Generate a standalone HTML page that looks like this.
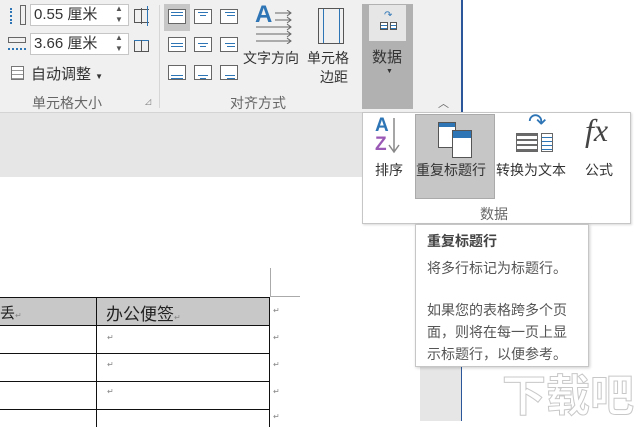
<!DOCTYPE html>
<html><head><meta charset="utf-8"><style>
*{margin:0;padding:0;box-sizing:border-box}
body{width:641px;height:421px;overflow:hidden;position:relative;background:#fff;font-family:"Liberation Sans","Noto Sans CJK SC",sans-serif;color:#444}
.a{position:absolute}
.t{position:absolute;white-space:nowrap;font-size:14px;color:#444}
.in{position:absolute;background:#fff;border:1px solid #c6c6c6;height:22px;width:99px;font-size:15px;padding-left:3px;line-height:20px;color:#333}
.al{position:absolute;width:18px;height:15px;border:1px solid #666;background:#fff}
.al i{position:absolute;height:1px;background:#2e75b6}
</style></head><body>
<div class="a" style="left:0;top:0;width:462px;height:113px;background:#f0f0f0;border-bottom:1px solid #d4d4d4"></div>
<div class="a" style="left:461px;top:0;width:2px;height:113px;background:#2b579a"></div>
<div class="a" style="left:0;top:113px;width:462px;height:64px;background:#e6e6e6"></div>
<div class="a" style="left:420px;top:177px;width:42px;height:244px;background:#e6e6e6"></div>
<div class="a" style="left:461px;top:113px;width:1px;height:308px;background:#2b579a"></div>
<!-- cell size group -->
<div class="a" style="left:10px;top:8px;width:6px;height:16px;border-left:2px dotted #2e75b6"></div>
<div class="a" style="left:20px;top:5px;width:6px;height:20px;border:1px solid #666"></div>
<div class="a" style="left:8px;top:37px;width:18px;height:6px;border:1px solid #666"></div>
<div class="a" style="left:8px;top:48px;width:18px;height:2px;border-top:2px dotted #2e75b6"></div>
<div class="in" style="left:30px;top:4px">0.55 厘米</div>
<div class="in" style="left:30px;top:33px">3.66 厘米</div>
<div class="t" style="left:115px;top:4px;font-size:8px;color:#555">▲</div>
<div class="t" style="left:115px;top:15px;font-size:8px;color:#555">▼</div>
<div class="t" style="left:115px;top:33px;font-size:8px;color:#555">▲</div>
<div class="t" style="left:115px;top:44px;font-size:8px;color:#555">▼</div>
<div class="a" style="left:134px;top:9px;width:15px;height:14px;border:1px solid #555;border-right:none"></div>
<div class="a" style="left:141px;top:8px;width:1px;height:16px;background:#555"></div>
<div class="a" style="left:147px;top:6px;width:1px;height:20px;background:#2e75b6"></div>
<div class="a" style="left:134px;top:40px;width:15px;height:12px;border:1px solid #555"></div>
<div class="a" style="left:134px;top:40px;width:15px;height:1px;background:#2e75b6"></div>
<div class="a" style="left:141px;top:40px;width:1px;height:12px;background:#555"></div>
<div class="a" style="left:11px;top:66px;width:13px;height:14px;border:1px solid #777;background:repeating-linear-gradient(#fff 0 3px,#999 3px 4px)"></div>
<div class="t" style="left:31px;top:63px;font-size:15px;color:#333">自动调整 <span style="font-size:8px">▼</span></div>
<div class="t" style="left:32px;top:93px;color:#666">单元格大小</div>
<div class="t" style="left:145px;top:97px;font-size:8px;color:#777">◿</div>
<div class="a" style="left:159px;top:5px;width:1px;height:103px;background:#d6d6d6"></div>
<!-- alignment -->
<div class="a" style="left:164px;top:4px;width:26px;height:27px;background:#c6c6c6"></div>
<div class="al" style="left:168px;top:9px"><i style="left:2px;top:2px;width:12px"></i><i style="left:2px;top:5px;width:12px"></i></div>
<div class="al" style="left:194px;top:9px"><i style="left:3px;top:2px;width:10px"></i><i style="left:5px;top:5px;width:6px"></i></div>
<div class="al" style="left:220px;top:9px"><i style="left:4px;top:2px;width:10px"></i><i style="left:6px;top:5px;width:8px"></i></div>
<div class="al" style="left:168px;top:37px"><i style="left:2px;top:5px;width:12px"></i><i style="left:2px;top:8px;width:12px"></i></div>
<div class="al" style="left:194px;top:37px"><i style="left:3px;top:5px;width:10px"></i><i style="left:5px;top:8px;width:6px"></i></div>
<div class="al" style="left:220px;top:37px"><i style="left:4px;top:5px;width:10px"></i><i style="left:6px;top:8px;width:8px"></i></div>
<div class="al" style="left:168px;top:65px"><i style="left:2px;top:9px;width:12px"></i><i style="left:2px;top:12px;width:12px"></i></div>
<div class="al" style="left:194px;top:65px"><i style="left:3px;top:9px;width:10px"></i><i style="left:5px;top:12px;width:6px"></i></div>
<div class="al" style="left:220px;top:65px"><i style="left:4px;top:9px;width:10px"></i><i style="left:6px;top:12px;width:8px"></i></div>
<div class="t" style="left:255px;top:1px;font-size:24px;font-weight:bold;color:#2e75b6">A</div>
<svg class="a" style="left:255px;top:10px" width="40" height="34"><g stroke="#666" fill="none" stroke-width="1"><path d="M20 3H36M32 0L36 3L32 6M20 10H36M32 7L36 10L32 13M1 17H36M32 14L36 17L32 20M1 24H36M32 21L36 24L32 27M1 31H36M32 28L36 31L32 34"/></g></svg>
<div class="a" style="left:318px;top:8px;width:26px;height:36px;border:1px solid #555;background:linear-gradient(90deg,transparent 4px,#2e75b6 4px 5px,transparent 5px 20px,#2e75b6 20px 21px,transparent 21px)"></div>
<div class="t" style="left:243px;top:48px;color:#333">文字方向</div>
<div class="t" style="left:307px;top:48px;color:#333">单元格</div>
<div class="t" style="left:320px;top:67px;color:#333">边距</div>
<div class="t" style="left:230px;top:93px;color:#666">对齐方式</div>
<!-- data button -->
<div class="a" style="left:362px;top:4px;width:51px;height:105px;background:#b1b1b1"></div>
<div class="a" style="left:369px;top:5px;width:37px;height:36px;background:#e6e6e6"></div>
<div class="a" style="left:380px;top:22px;width:8px;height:8px;border:1px solid #555;background:repeating-linear-gradient(#fff 0 2px,#2e75b6 2px 3px)"></div>
<div class="a" style="left:390px;top:22px;width:7px;height:8px;border:1px solid #555;background:repeating-linear-gradient(#fff 0 2px,#2e75b6 2px 3px)"></div>
<div class="t" style="left:384px;top:10px;font-size:10px;color:#2e75b6">↷</div>
<div class="t" style="left:372px;top:46px;font-size:15px;color:#333">数据</div>
<div class="t" style="left:386px;top:68px;font-size:7px;color:#333">▼</div>
<div class="t" style="left:438px;top:95px;font-size:11px;color:#666">︿</div>
<!-- dropdown -->
<div class="a" style="left:362px;top:112px;width:269px;height:112px;background:#fff;border:1px solid #c6c6c6;box-shadow:1px 1px 2px rgba(0,0,0,.15)"></div>
<div class="a" style="left:415px;top:114px;width:80px;height:85px;background:#c6c6c6;border:1px solid #aaa"></div>
<div class="t" style="left:375px;top:116px;font-size:19px;font-weight:bold;color:#2e75b6;line-height:19px">A</div>
<div class="t" style="left:375px;top:135px;font-size:19px;font-weight:bold;color:#9b59b6;line-height:19px">Z</div>
<svg class="a" style="left:388px;top:118px" width="12" height="36"><path d="M6 0V34M1 27L6 34L11 27" stroke="#888" stroke-width="1.5" fill="none"/></svg>
<div class="t" style="left:375px;top:160px;color:#333">排序</div>
<div class="a" style="left:438px;top:122px;width:18px;height:26px;border:1px solid #555;background:#fff linear-gradient(#2e75b6 0 4px,transparent 4px)"></div>
<div class="a" style="left:452px;top:130px;width:20px;height:28px;border:1px solid #555;background:#fff linear-gradient(#2e75b6 4px 7px,transparent 7px)"></div>
<div class="t" style="left:416px;top:160px;color:#333">重复标题行</div>
<div class="a" style="left:516px;top:133px;width:22px;height:19px;border:1px solid #666;background:repeating-linear-gradient(#6a6a6a 0 2px,#fff 2px 5px)"></div>
<div class="a" style="left:541px;top:133px;width:12px;height:19px;border:1px solid #666;background:repeating-linear-gradient(#fff 0 3px,#2e75b6 3px 4px)"></div>
<div class="t" style="left:528px;top:109px;font-size:22px;color:#2e75b6">↷</div>
<div class="t" style="left:496px;top:160px;color:#333">转换为文本</div>
<div class="t" style="left:585px;top:112px;font-size:32px;font-style:italic;font-family:'Liberation Serif',serif;color:#444">fx</div>
<div class="t" style="left:585px;top:160px;color:#333">公式</div>
<div class="t" style="left:480px;top:204px;color:#666">数据</div>
<!-- tooltip -->
<div class="a" style="left:415px;top:224px;width:174px;height:143px;background:#fff;border:1px solid #c6c6c6;box-shadow:1px 1px 3px rgba(0,0,0,.2)"></div>
<div class="t" style="left:427px;top:231px;font-weight:bold;color:#444">重复标题行</div>
<div class="t" style="left:427px;top:258px;color:#555">将多行标记为标题行。</div>
<div class="t" style="left:427px;top:299px;color:#555;line-height:22px">如果您的表格跨多个页<br>面，则将在每一页上显<br>示标题行，以便参考。</div>
<!-- document -->
<div class="a" style="left:270px;top:268px;width:1px;height:29px;background:#aaa"></div>
<div class="a" style="left:270px;top:296px;width:30px;height:1px;background:#aaa"></div>
<div class="a" style="left:0;top:297px;width:270px;height:28px;background:#c8c8c8"></div>
<div class="a" style="left:0;top:297px;width:270px;height:130px;border-top:1px solid #111;border-right:1px solid #111;background:repeating-linear-gradient(transparent 0 27px,#111 27px 28px) 0 0/100% 100%"></div>
<div class="a" style="left:96px;top:297px;width:1px;height:130px;background:#111"></div>
<div class="t" style="left:0;top:302px;font-size:15px;color:#222">丢<span style="font-size:8px;color:#888">↵</span></div>
<div class="t" style="left:106px;top:300px;font-size:17px;color:#222">办公便签<span style="font-size:8px;color:#888">↵</span></div>
<div class="t" style="left:107px;top:333px;font-size:8px;color:#888">↵</div>
<div class="t" style="left:107px;top:360px;font-size:8px;color:#888">↵</div>
<div class="t" style="left:107px;top:387px;font-size:8px;color:#888">↵</div>
<div class="t" style="left:273px;top:306px;font-size:8px;color:#888">↵</div>
<div class="t" style="left:273px;top:333px;font-size:8px;color:#888">↵</div>
<div class="t" style="left:273px;top:360px;font-size:8px;color:#888">↵</div>
<div class="t" style="left:273px;top:387px;font-size:8px;color:#888">↵</div>
<div class="t" style="left:273px;top:412px;font-size:8px;color:#888">↵</div>
<!-- watermark -->
<div class="t" style="left:502px;top:360px;font-size:44px;font-weight:bold;color:rgba(255,255,255,.6);-webkit-text-stroke:1px #c8c8c8">下载吧</div>
</body></html>
